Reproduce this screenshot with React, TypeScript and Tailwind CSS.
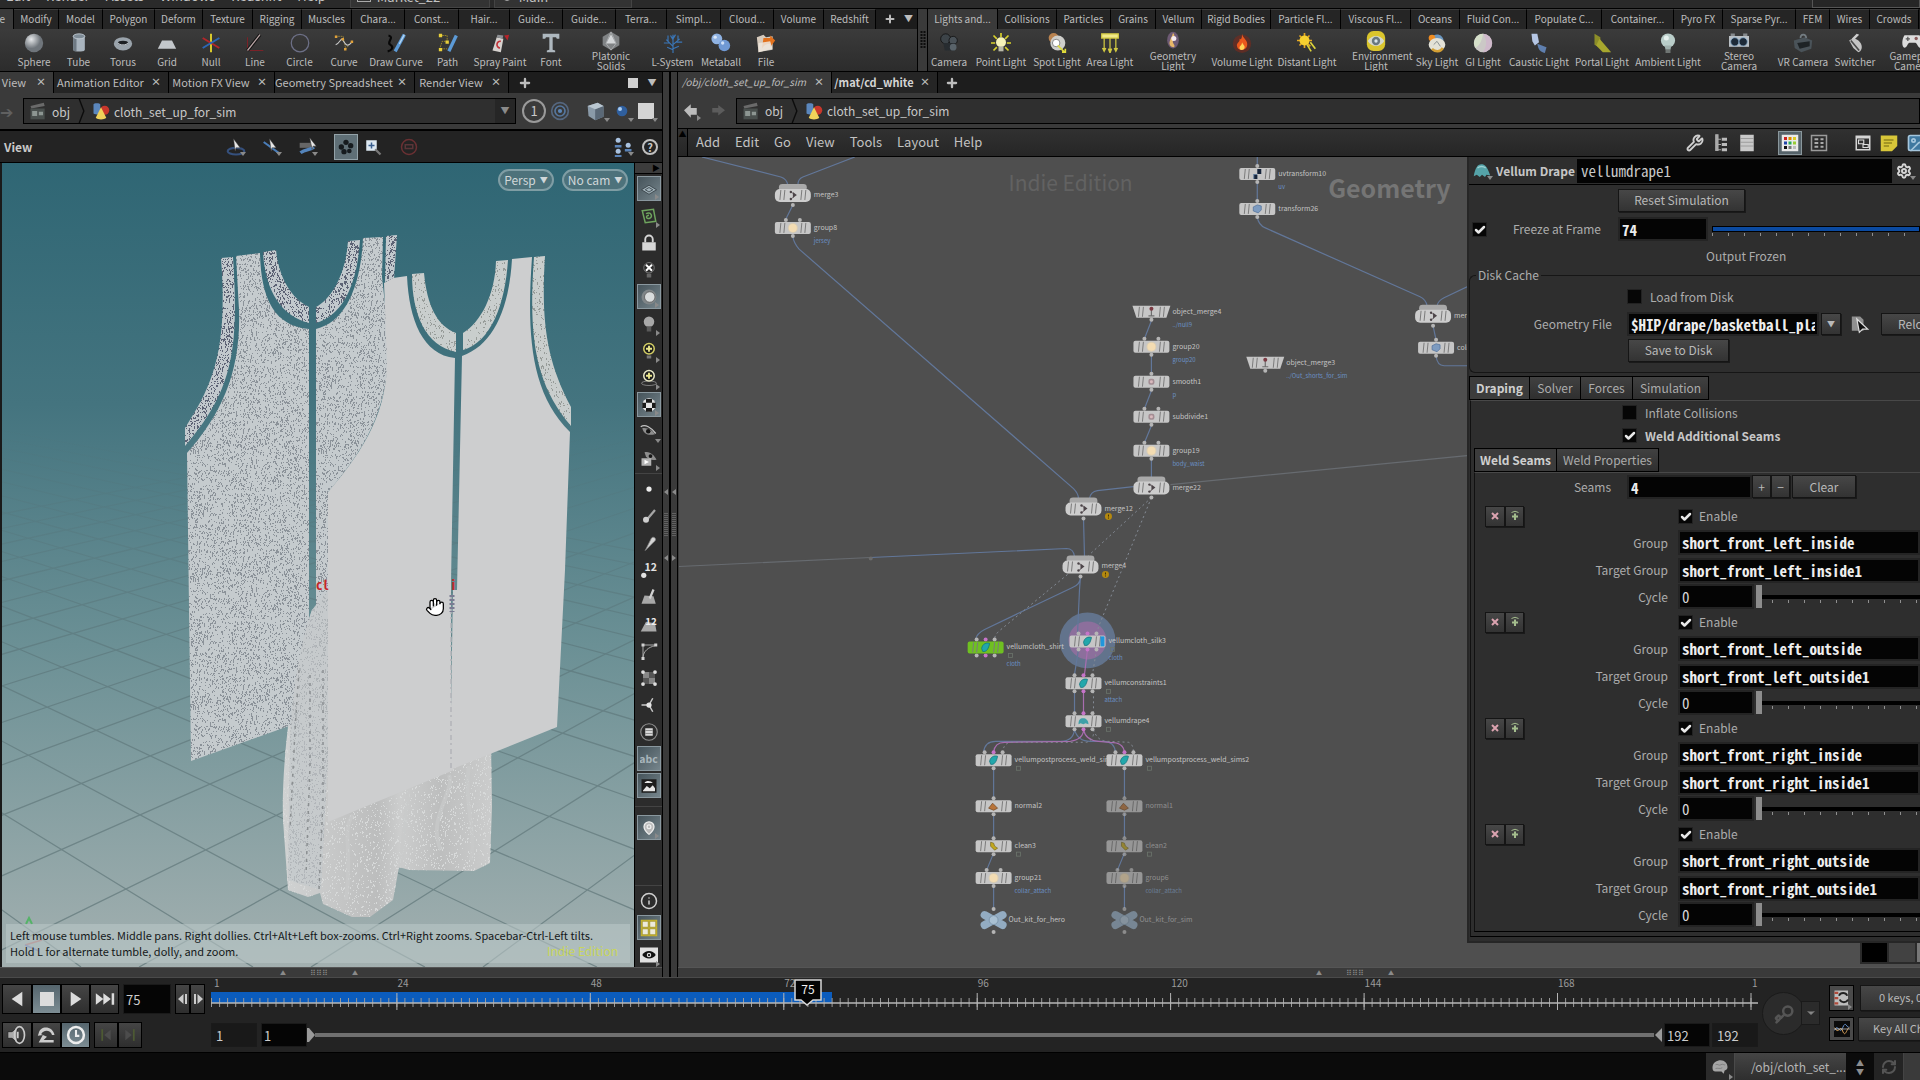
import type { ReactNode } from "react";
import { Check, ChevronDown, Hand, Image as ImageIcon, Info, Key, MapPin, Plus, RefreshCw, Settings, Wrench } from "lucide-react";

const UI = "font-['Noto_Sans_CJK_SC','Open_Sans',sans-serif]";
const MONO = "font-['Noto_Sans_Mono_CJK_SC','DejaVu_Sans_Mono',monospace]";

/* ---------- shelf data ---------- */

const leftShelfTabs = [
  { label: "Modify", w: "w-[45px]" },
  { label: "Model", w: "w-[44px]" },
  { label: "Polygon", w: "w-[52px]" },
  { label: "Deform", w: "w-[48px]" },
  { label: "Texture", w: "w-[50px]" },
  { label: "Rigging", w: "w-[49px]" },
  { label: "Muscles", w: "w-[50px]" },
  { label: "Chara...", w: "w-[53px]" },
  { label: "Const...", w: "w-[54px]" },
  { label: "Hair...", w: "w-[51px]" },
  { label: "Guide...", w: "w-[53px]" },
  { label: "Guide...", w: "w-[53px]" },
  { label: "Terra...", w: "w-[51px]" },
  { label: "Simpl...", w: "w-[54px]" },
  { label: "Cloud...", w: "w-[53px]" },
  { label: "Volume", w: "w-[50px]" },
  { label: "Redshift", w: "w-[52px]" },
];

const rightShelfTabs = [
  { label: "Lights and...", w: "w-[70px]", active: true },
  { label: "Collisions", w: "w-[59px]" },
  { label: "Particles", w: "w-[54px]" },
  { label: "Grains", w: "w-[45px]" },
  { label: "Vellum", w: "w-[46px]" },
  { label: "Rigid Bodies", w: "w-[69px]" },
  { label: "Particle Fl...", w: "w-[70px]" },
  { label: "Viscous Fl...", w: "w-[70px]" },
  { label: "Oceans", w: "w-[49px]" },
  { label: "Fluid Con...", w: "w-[67px]" },
  { label: "Populate C...", w: "w-[75px]" },
  { label: "Container...", w: "w-[72px]" },
  { label: "Pyro FX", w: "w-[49px]" },
  { label: "Sparse Pyr...", w: "w-[73px]" },
  { label: "FEM", w: "w-[34px]" },
  { label: "Wires", w: "w-[40px]" },
  { label: "Crowds", w: "w-[49px]" },
];

const leftTools = [
  { label: "Sphere", icon: "sphere", w: "w-[44px]" },
  { label: "Tube", icon: "tube", w: "w-[45px]" },
  { label: "Torus", icon: "torus", w: "w-[44px]" },
  { label: "Grid", icon: "grid", w: "w-[44px]" },
  { label: "Null", icon: "null", w: "w-[44px]" },
  { label: "Line", icon: "line", w: "w-[44px]" },
  { label: "Circle", icon: "circle", w: "w-[45px]" },
  { label: "Curve", icon: "curve", w: "w-[44px]" },
  { label: "Draw Curve", icon: "draw", w: "w-[60px]" },
  { label: "Path", icon: "path", w: "w-[43px]" },
  { label: "Spray Paint", icon: "spray", w: "w-[62px]" },
  { label: "Font", icon: "font", w: "w-[40px]" },
  { label: "Platonic Solids", icon: "platonic", w: "w-[80px]" },
  { label: "L-System", icon: "lsystem", w: "w-[43px]" },
  { label: "Metaball", icon: "metaball", w: "w-[54px]" },
  { label: "File", icon: "file", w: "w-[36px]" },
];

const rightTools = [
  { label: "Camera", icon: "camera", w: "w-[42px]" },
  { label: "Point Light", icon: "point", w: "w-[62px]" },
  { label: "Spot Light", icon: "spot", w: "w-[50px]" },
  { label: "Area Light", icon: "area", w: "w-[56px]" },
  { label: "Geometry Light", icon: "geo", w: "w-[70px]" },
  { label: "Volume Light", icon: "volume", w: "w-[68px]" },
  { label: "Distant Light", icon: "distant", w: "w-[62px]" },
  { label: "Environment Light", icon: "env", w: "w-[76px]" },
  { label: "Sky Light", icon: "sky", w: "w-[46px]" },
  { label: "GI Light", icon: "gi", w: "w-[46px]" },
  { label: "Caustic Light", icon: "caustic", w: "w-[66px]" },
  { label: "Portal Light", icon: "portal", w: "w-[60px]" },
  { label: "Ambient Light", icon: "ambient", w: "w-[72px]" },
  { label: "Stereo Camera", icon: "stereo", w: "w-[70px]" },
  { label: "VR Camera", icon: "vr", w: "w-[58px]" },
  { label: "Switcher", icon: "switcher", w: "w-[46px]" },
  { label: "Gamepad Camera", icon: "gamepad", w: "w-[68px]" },
];

const wrappedLabels = ["Platonic Solids", "Geometry Light", "Environment Light", "Stereo Camera", "Gamepad Camera"];

const toolArt: Record<string, ReactNode> = {
  sphere: <ellipse cx="12" cy="12" rx="11" ry="11" fill="url(#ball)" />,
  tube: (
    <>
      <path d="M5 4v16c0 3 14 3 14 0V4z" fill="#a9b4be" />
      <path d="M5 4v16c0 1 2 2 4 2V5z" fill="#6e7983" />
      <ellipse cx="12" cy="4" rx="7" ry="3" fill="#7e8b96" stroke="#c7d0d8" />
    </>
  ),
  torus: (
    <>
      <ellipse cx="12" cy="13" rx="11" ry="8" fill="#9aa3ab" />
      <ellipse cx="12" cy="12" rx="6" ry="2.6" fill="#1c1f22" />
      <path d="M6 12c2 3 10 3 12 0" stroke="#dfe5ea" fill="none" />
    </>
  ),
  grid: <path d="M6 9h12l5 10H1z" fill="#c3c7cb" />,
  null: (
    <>
      <path d="M12 1v22" stroke="#d8c92c" strokeWidth="2.4" />
      <path d="M2 6l20 12" stroke="#b3262a" strokeWidth="2.4" />
      <path d="M2 18L22 6" stroke="#2c67b5" strokeWidth="2.4" />
    </>
  ),
  line: (
    <>
      <path d="M3 21V5M3 21h19" stroke="#7a2228" strokeWidth="1.3" />
      <path d="M3 21L18 2" stroke="#111" strokeWidth="4" />
      <path d="M3 21L18 2" stroke="#b9a5a5" strokeWidth="1.6" />
    </>
  ),
  circle: <circle cx="12" cy="12" r="10.5" fill="none" stroke="#6d7087" strokeWidth="1.5" />,
  curve: (
    <>
      <path d="M2 4h9l3 15L22 10" stroke="#a58b3a" fill="none" strokeDasharray="2 1" />
      <path d="M2 14c6-2 6-10 9-5s5 9 11 1" stroke="#c9c9c9" fill="none" strokeWidth="1.3" />
      <path d="M1 3h3v3H1zM9 6h3v3H9zM12 18h3v3h-3zM20 9h3v3h-3z" fill="#e0a13a" />
    </>
  ),
  draw: (
    <>
      <path d="M3 3c8 2-3 8 2 11s2 7-3 8" stroke="#070707" strokeWidth="2.6" fill="none" />
      <path d="M22 2L11 22" stroke="#5c9ad6" strokeWidth="4" />
      <path d="M22 2l-6 11" stroke="#b7d7f2" strokeWidth="1.5" />
    </>
  ),
  path: (
    <>
      <path d="M2 3h9v7H5l-3 9h9" stroke="#a99325" fill="none" strokeDasharray="2 1" />
      <path d="M22 3L13 22" stroke="#5c9ad6" strokeWidth="4" />
      <path d="M1 1h4v4H1zM9 9h4v4H9zM1 18h4v4H1z" fill="#e8cf3a" />
    </>
  ),
  spray: (
    <>
      <path d="M8 5l8 2-3 16-10-2z" fill="#d6d2cf" />
      <path d="M9 2l7 1-1 4-7-2z" fill="#8d9094" />
      <path d="M13 10c-6-1-6 8-1 8" stroke="#c23339" strokeWidth="2" fill="none" />
      <path d="M17 3l6-1-2 7z" fill="#b8232a" />
    </>
  ),
  font: <path d="M2 1h20v6h-3l-1-2h-4v15l3 1v2H7v-2l3-1V5H6L5 7H2z" fill="#aeb8bf" />,
  platonic: (
    <>
      <path d="M12 1l10 6v10l-10 6L2 17V7z" fill="#808385" />
      <path d="M12 4l6 11H6z" fill="#d3d6d8" />
      <path d="M12 1L6 15l6 8 6-8z" fill="none" stroke="#aeb1b3" />
    </>
  ),
  lsystem: <path d="M12 24V12M12 16L4 8M12 14l8-7M12 12V2M6 10V3M8 12H1M18 9V3M16 11h7M12 8L9 3M12 7l3-5M12 20l-7-3M12 19l7-3" stroke="#3a76b8" strokeWidth="1.4" fill="none" />,
  metaball: (
    <>
      <circle cx="7" cy="7" r="6.5" fill="#8fb2e2" />
      <circle cx="16" cy="15" r="7" fill="#7099d4" />
      <circle cx="5" cy="5" r="2" fill="#dbe8f9" />
      <circle cx="14" cy="12" r="2" fill="#cfe0f7" />
    </>
  ),
  file: (
    <>
      <path d="M1 5l8-3 3 3 8-1v15L3 23z" fill="#d7cbbd" />
      <path d="M9 6h8V3l6 6-6 8v-4c-5 0-8 2-10 6z" fill="#e2711d" />
      <path d="M3 12l14-2 3 10L3 23z" fill="#efe8de" opacity=".85" />
    </>
  ),
  camera: (
    <>
      <circle cx="8" cy="7" r="6" fill="#3c4348" stroke="#111" />
      <circle cx="17" cy="9" r="5" fill="#4a5258" stroke="#111" />
      <path d="M5 12h14v9H7z" fill="#272c30" />
      <circle cx="17" cy="17" r="4" fill="#59636a" />
    </>
  ),
  point: (
    <>
      <path d="M12 0v5M0 12h5M19 12h5M3 3l4 4M21 3l-4 4M3 21l4-4M21 21l-4-4" stroke="#d9d22b" strokeWidth="2" />
      <circle cx="12" cy="11" r="6" fill="#f5f2b8" />
      <path d="M9 16h6v6H9z" fill="#b9b9a8" />
    </>
  ),
  spot: (
    <>
      <circle cx="8" cy="6" r="6" fill="#b98350" />
      <circle cx="13" cy="12" r="9" fill="#cfcfcb" />
      <circle cx="11" cy="12" r="4.5" fill="#fff" stroke="#777" />
      <path d="M13 15l8 8M18 23h4v-4" stroke="#e0dc3a" strokeWidth="2" fill="none" />
    </>
  ),
  area: <path d="M2 1h20v5H2zM5 7v13M12 7v15M19 7v13M3 18l2 4 2-4M10 19l2 5 2-5M17 18l2 4 2-4" fill="#f1e98a" stroke="#cfc740" strokeWidth="1.5" />,
  geo: (
    <>
      <ellipse cx="12" cy="11" rx="7" ry="10" fill="#6d5a74" />
      <path d="M12 2c5 6-3 8 1 14s-7 4-5-3 3-6 4-11" fill="#e7b768" />
      <circle cx="13" cy="9" r="3" fill="#f4e9f0" />
    </>
  ),
  volume: (
    <>
      <circle cx="12" cy="13" r="11" fill="#7c2a1c" opacity=".6" />
      <path d="M12 1c1 6 8 8 6 15-2 6-11 6-12 0-1-5 4-4 3-9 3 2 3-3 3-6z" fill="#e9581d" />
      <path d="M12 11c1 3 4 4 3 7s-6 3-6 0 3-3 3-7z" fill="#ffd457" />
    </>
  ),
  distant: (
    <>
      <path d="M9 0v18M0 9h18M3 3l13 13M15 3L3 15" stroke="#e6a823" strokeWidth="2" />
      <circle cx="9" cy="9" r="6" fill="#f6d02f" />
      <path d="M12 14l5 8M16 11l6 8" stroke="#ddd43a" strokeWidth="2" />
    </>
  ),
  env: (
    <>
      <rect x="1" y="0" width="22" height="24" rx="8" fill="#dac52d" />
      <path d="M2 12c5-8 15-8 20 0-5 8-15 8-20 0z" fill="#d6d9cd" />
      <circle cx="12" cy="12" r="5" fill="#68787f" />
      <circle cx="12" cy="12" r="2" fill="#d8e5ea" />
    </>
  ),
  sky: (
    <>
      <path d="M8 3c4-3 11-1 12 6H8z" fill="#6a96bf" />
      <circle cx="6" cy="6" r="4" fill="#ef8d23" />
      <ellipse cx="12" cy="14" rx="10" ry="8" fill="#e4e2d7" />
      <path d="M6 19c4 4 10 4 13-1" stroke="#d4a035" strokeWidth="3" fill="none" />
      <path d="M8 14l4-4 4 6" stroke="#7a8187" fill="none" />
    </>
  ),
  gi: (
    <>
      <circle cx="12" cy="12" r="11" fill="#cbc8c6" />
      <path d="M12 1a11 11 0 0 1 0 22c5-7 5-15 0-22z" fill="#cfb9cb" />
      <path d="M12 1a11 11 0 0 0-9 17c5-3 8-9 9-17z" fill="#d5dfc9" />
    </>
  ),
  caustic: (
    <>
      <path d="M3 1h7l2 10-5 4-3-5z" fill="#b5c6e4" />
      <path d="M10 13l11 4-2 7c-6-1-8-5-9-11z" fill="#5f7fae" />
    </>
  ),
  portal: (
    <>
      <path d="M3 1l7 4v13L3 14z" fill="#8c8d28" />
      <path d="M9 7l14 16H13L5 15z" fill="#a7a72e" />
    </>
  ),
  ambient: (
    <>
      <circle cx="12" cy="9" r="8.5" fill="#b9cdc9" />
      <path d="M8 15h8l-1 5H9z" fill="#9fb0ad" />
      <rect x="9" y="20" width="6" height="4" fill="#6f7573" />
      <circle cx="10" cy="6" r="3" fill="#e6f1ee" />
    </>
  ),
  stereo: (
    <>
      <path d="M0 6h24v13H0z" fill="#b9bfc4" />
      <circle cx="7" cy="13" r="5" fill="#1d2a38" stroke="#86a9c9" />
      <circle cx="17" cy="13" r="5" fill="#1d2a38" stroke="#86a9c9" />
      <path d="M2 3h5v3H2zM17 3h5v3h-5z" fill="#85898c" />
    </>
  ),
  vr: (
    <>
      <path d="M1 9l13-4 9 4-1 10-12 4-8-5z" fill="#4a5359" />
      <path d="M5 12l15-2v6L8 19z" fill="#1e2326" />
      <path d="M9 6c0-5 6-6 7 0" stroke="#737c82" fill="none" strokeWidth="2" />
    </>
  ),
  switcher: (
    <>
      <path d="M14 1l3 1-6 6-3-1z" fill="#cfcfcf" />
      <path d="M5 9c5-4 10-2 13 2 4 5 2 11-2 12l-6-5z" fill="#c4c4c4" />
      <path d="M7 9l10 12" stroke="#4a4a4a" strokeWidth="2" />
    </>
  ),
  gamepad: (
    <>
      <path d="M3 5h18c3 6 4 15 1 15s-4-6-6-6H9c-2 0-3 6-6 6S-1 11 3 5z" fill="#dcdcdc" />
      <path d="M7 7v5M4.5 9.5h5" stroke="#555" strokeWidth="1.5" />
      <circle cx="17" cy="9" r="2" fill="#8a5a5a" />
    </>
  ),
};

function Svg({ children, className = "size-5" }: { children: ReactNode; className?: string }) {
  return (
    <svg viewBox="0 0 24 24" className={`shrink-0 ${className}`} aria-hidden="true">
      {children}
    </svg>
  );
}

type ShelfTab = { label: string; w: string; active?: boolean };
type Tool = { label: string; icon: string; w: string };

function ShelfTabs({ tabs }: { tabs: ShelfTab[] }) {
  return (
    <>
      {tabs.map((t, i) => (
        <button
          key={i}
          className={`h-full shrink-0 border-r border-black text-center whitespace-nowrap ${t.w} ${
            t.active ? "bg-[#3a3a3a]" : "border-t border-t-[#3d3d3d] bg-[#252525]"
          }`}
        >
          {t.label}
        </button>
      ))}
    </>
  );
}

function ShelfTools({ tools }: { tools: Tool[] }) {
  return (
    <>
      {tools.map((t) =>
        wrappedLabels.includes(t.label) ? (
          <button key={t.label} className={`flex h-full shrink-0 flex-col items-center pt-0.5 leading-[10px] ${t.w}`}>
            <Svg>{toolArt[t.icon]}</Svg>
            <span className="w-12 text-center">{t.label}</span>
          </button>
        ) : (
          <button key={t.label} className={`flex h-full shrink-0 flex-col items-center gap-1 pt-1 leading-[10px] whitespace-nowrap ${t.w}`}>
            <Svg>{toolArt[t.icon]}</Svg>
            <span>{t.label}</span>
          </button>
        )
      )}
    </>
  );
}

function TopMenu() {
  return (
    <header className="flex h-[9px] shrink-0 items-end overflow-hidden border-b border-black bg-[#2a2a2a] text-[13px] leading-4 text-[#c4c4c4]">
      <nav className="flex gap-4 pb-1 pl-1.5">
        {["Edit", "Render", "Assets", "Windows", "Redshift", "Help"].map((m) => (
          <button key={m}>{m}</button>
        ))}
      </nav>
      <div className="ml-6 flex w-[140px] items-center gap-1.5 border-x border-b border-[#444] bg-[#333] px-1.5 pb-0.5">
        <span className="h-2.5 w-3.5 border border-[#aaa]" />
        <span>Market_22</span>
      </div>
      <div className="ml-1 flex w-[138px] items-center gap-2 border-x border-b border-[#444] bg-[#333] px-2 pb-0.5">
        <span className="size-2 rounded-full border border-[#aaa]" />
        <span>Main</span>
      </div>
      <div className="ml-auto h-4 w-[108px] border border-[#555] bg-[#262626]" />
    </header>
  );
}

function Shelf() {
  return (
    <section className="flex h-[63px] shrink-0 overflow-hidden border-b border-black text-[10px] text-[#bdbdbd]">
      <div className="flex w-[917px] shrink-0 flex-col">
        <div className="flex h-5 bg-[#1c1c1c]">
          <button className="flex w-[14px] shrink-0 items-center justify-end overflow-hidden border-r border-black bg-[#3a3a3a] pr-2">
            Create
          </button>
          <ShelfTabs tabs={leftShelfTabs} />
          <button className="flex w-7 items-center justify-center" aria-label="Add shelf"><Plus className="size-3" strokeWidth={4} /></button>
          <button className="text-[9px]" aria-label="Shelf menu">▼</button>
        </div>
        <div className="flex flex-1 bg-linear-to-b from-[#3b3b3b] to-[#2c2c2c] pl-3">
          <ShelfTools tools={leftTools} />
        </div>
      </div>
      <div className="flex w-[11px] shrink-0 items-center justify-center border-x border-black bg-[#3a3a3a]">
        <svg viewBox="0 0 6 18" className="h-[18px] w-1.5"><path d="M1.5 0v18M4.5 0v18" stroke="#0d0d0d" strokeWidth="2" strokeDasharray="2 1" /></svg>
      </div>
      <div className="flex min-w-0 flex-1 flex-col">
        <div className="flex h-5 bg-[#1c1c1c]">
          <ShelfTabs tabs={rightShelfTabs} />
        </div>
        <div className="flex flex-1 bg-linear-to-b from-[#3b3b3b] to-[#2c2c2c]">
          <ShelfTools tools={rightTools} />
        </div>
      </div>
    </section>
  );
}

function PaneTab({ label, w, active, text = "" }: { label: string; w: string; active?: boolean; text?: string }) {
  return (
    <div className={`flex h-full shrink-0 items-center justify-end border-r border-black pr-[7px] ${w} ${active ? "bg-[#3a3a3a]" : "bg-[#252525]"}`}>
      <button className={`flex-1 pr-1 text-center whitespace-nowrap ${text}`}>{label}</button>
      <button className="text-[10px] font-bold" aria-label={`Close ${label}`}>×</button>
    </div>
  );
}

function Clapper() {
  return (
    <Svg className="size-5">
      <path d="M3 6l16-4 1 4L4 9z" fill="#6a6a6a" />
      <path d="M3 9h17v13H3z" fill="#4a504e" />
      <path d="M5 12h6v6H5zM13 13h5v4h-5z" fill="#8d9692" />
    </Svg>
  );
}

function GeoIcon() {
  return (
    <Svg className="size-[18px]">
      <path d="M2 3c0-2 9-2 9 0v12c0 2-9 2-9 0z" fill="#5b87bd" />
      <circle cx="17" cy="11" r="6" fill="#c8372c" />
      <path d="M12 7l7 14c-3 3-11 3-14 0z" fill="#f0d25a" />
    </Svg>
  );
}

function PathBox({ dropdown }: { dropdown?: boolean }) {
  return (
    <div className="flex h-[26px] min-w-0 flex-1 items-center border border-black bg-[#2f2f2f] text-[12px] text-[#c8c8c8]">
      <span className="flex h-full items-center gap-1 pl-1"><Clapper />obj</span>
      <svg viewBox="0 0 8 26" className="ml-2 h-full w-2"><path d="M1 0l5 13-5 13" fill="none" stroke="#0c0c0c" strokeWidth="1.5" /></svg>
      <span className="flex flex-1 items-center gap-1 pl-1.5"><GeoIcon />cloth_set_up_for_sim</span>
      {dropdown && <button className="flex h-full w-5 items-center justify-center bg-[#262626] text-[9px] text-[#8a8a8a]" aria-label="Path history">▼</button>}
    </div>
  );
}

function Tri({ dir = "down" }: { dir?: "down" | "right" }) {
  return (
    <svg viewBox="0 0 6 6" className="absolute right-0 bottom-0 size-1.5">
      <path d={dir === "down" ? "M0 1h6L3 5z" : "M1 0v6l4-3z"} fill="#8a8a8a" />
    </svg>
  );
}

/* ---------- 3D viewport ---------- */

function speckle(size: number, count: number, seed: number) {
  let s = seed;
  const rnd = () => {
    s = (s * 16807) % 2147483647;
    return s / 2147483647;
  };
  let d = "";
  for (let i = 0; i < count; i++) {
    const x = Math.floor(rnd() * size);
    const y = Math.floor(rnd() * size);
    const h = rnd() > 0.7 ? 2 : 1;
    d += `M${x} ${y}h1v${h}h-1z`;
  }
  return d;
}

const dotsBody = speckle(128, 2700, 77);
const dotsDense = speckle(96, 2100, 1234);
const dotsLight = speckle(128, 1500, 991);

const floorLines: string[] = [];
for (let i = -14; i <= 16; i++) {
  floorLines.push(`M-900 260L${80 + i * 172} 967`);
  floorLines.push(`M1500 215L${138 + i * 172} 967`);
}

const backPanels =
  "M235 256L259 253C260 300 274 326 308 329V715L288 726 190 761 186 453C222 412 240 370 238 310zM315 329C345 322 360 285 362 238L382 237 381 277 388 340C388 400 372 440 327 492V760H315z";
const backTrim =
  "M220 258L232 257C238 350 232 390 184 446V428C212 385 227 350 220 258zM262 252L275 250C278 278 290 298 308 307V323C280 316 264 290 262 252zM347 241L359 240C356 285 342 315 315 323V307C332 298 345 272 347 241zM385 236L396 235 393 279 384 282z";
const frontPanels =
  "M383 283L392 278 406 276C408 320 422 355 454 358L450 583V768L453 770 327 822V492C365 448 386 410 386 360zM461 356C492 345 508 310 511 259L531 257C526 330 528 392 569 432L564 570 556 727 449 770 452 590 456 590z";
const frontTrim =
  "M411 274L423 273C426 305 436 326 455 333V352C425 346 411 315 411 274zM495 261L507 260C504 305 490 342 462 350V333C480 322 494 295 495 261zM533 257L544 256C540 320 545 360 570 407V426C535 385 527 340 533 257z";
const shorts =
  "M311 610C292 670 280 760 282 820L287 890 307 897 319 893 322 904 351 917H369L392 900 398 867 408 870 473 871 489 863 491 807 490 740 330 600z";
const shortsBack = "M311 610C300 640 291 690 289 740L287 880 320 890 327 760V590z";

function ViewportScene() {
  return (
    <svg viewBox="0 163 634 804" preserveAspectRatio="xMidYMid slice" className="absolute inset-0 size-full">
      <defs>
        <linearGradient id="sky" x1="0" y1="0" x2="0" y2="1">
          <stop offset="0" stopColor="#2f6674" />
          <stop offset=".3" stopColor="#44747f" />
          <stop offset=".6" stopColor="#6b9095" />
          <stop offset="1" stopColor="#a3b0b0" />
        </linearGradient>
        <linearGradient id="floor" gradientUnits="userSpaceOnUse" x1="0" y1="400" x2="0" y2="967">
          <stop offset="0" stopColor="#4f6f75" stopOpacity="0" />
          <stop offset=".45" stopColor="#5a7478" stopOpacity=".6" />
          <stop offset="1" stopColor="#6a7f81" stopOpacity=".85" />
        </linearGradient>
        <linearGradient id="leg" x1="0" y1="0" x2="1" y2="0">
          <stop offset="0" stopColor="#d0d2d2" />
          <stop offset=".25" stopColor="#c6c7c7" />
          <stop offset=".45" stopColor="#bcbdbd" />
          <stop offset=".56" stopColor="#cccdcd" />
          <stop offset=".75" stopColor="#bdbebe" />
          <stop offset="1" stopColor="#cbcccc" />
        </linearGradient>
        <pattern id="body" width="128" height="128" patternUnits="userSpaceOnUse">
          <rect width="128" height="128" fill="#c5cbce" />
          <path d={dotsBody} fill="#8b9299" />
        </pattern>
        <pattern id="trim" width="96" height="96" patternUnits="userSpaceOnUse">
          <rect width="96" height="96" fill="#c2c9cd" />
          <path d={dotsDense} fill="#5d6375" />
        </pattern>
        <pattern id="trim2" width="128" height="128" patternUnits="userSpaceOnUse">
          <rect width="128" height="128" fill="#c9cecd" />
          <path d={dotsLight} fill="#979c99" />
        </pattern>
        <pattern id="mesh" width="128" height="128" patternUnits="userSpaceOnUse">
          <path d={dotsLight} fill="#d7d9d9" />
        </pattern>
      </defs>
      <rect x="0" y="163" width="634" height="804" fill="url(#sky)" />
      <path d={floorLines.join("")} stroke="url(#floor)" strokeWidth="1.3" fill="none" />
      <path d={shorts} fill="url(#leg)" />
      <path d={shorts} fill="url(#mesh)" />
      <path d="M400 868C402 830 408 800 408 780M345 900C352 850 340 830 352 815M440 850C425 820 455 790 448 775M470 860C476 830 462 800 468 766" stroke="#c9caca" strokeWidth="4" fill="none" opacity=".7" />
      <path d={backPanels} fill="url(#body)" />
      <path d={backTrim} fill="url(#trim)" />
      <path d={shortsBack} fill="#c6cacb" opacity=".9" />
      <path d={shortsBack} fill="url(#body)" opacity=".35" />
      <path d="M298 670l-4 60-5 100M309 675v90l-4 110M322 670v130l-4 90" stroke="#8b8f91" strokeWidth="1.5" strokeDasharray="3 5" fill="none" />
      <path d={frontPanels} fill="#cdcecf" />
      <path d={frontTrim} fill="url(#trim2)" />
      <path d="M450 595V768" stroke="#b2b4b9" strokeWidth="1.5" strokeDasharray="5 3 2 4" />
      <path d="M451 595v17" stroke="#7a7b92" strokeWidth="5" strokeDasharray="2 2" />
      <text x="315" y="590" fontSize="13" fontWeight="bold" fill="#c5262b" className={MONO}>cl</text>
      <text x="449" y="590" fontSize="13" fontWeight="bold" fill="#c5262b" className={MONO}>i</text>
      <path d="M25 924l3-6 3 6" fill="none" stroke="#55b368" strokeWidth="2" />
      <path d="M24 945l17-5" stroke="#b66a6c" strokeWidth="1.5" />
      <path d="M24 945l14 6" stroke="#6a74b6" strokeWidth="1.5" />
    </svg>
  );
}

type SideTool = { id: string; on?: boolean; tri?: "down" | "right"; art: ReactNode };

const sideTools: SideTool[] = [
  { id: "Plane", on: true, tri: "right", art: <path d="M2 13l10-6 10 6-10 6zM7 13l5-3 5 3-5 3z" fill="#9fb0b8" stroke="#2d363b" /> },
  { id: "Backface", tri: "right", art: <path d="M3 5l15-2 3 16L7 21zM8 9c6-4 10 4 5 6s-6-4-1-4" fill="none" stroke="#6ea45e" strokeWidth="2" /> },
  { id: "Lock", art: <><path d="M7 11V7a5 5 0 0 1 10 0v4" fill="none" stroke="#d6d6d6" strokeWidth="2.5" /><path d="M3 11h18v11H3z" fill="#d6d6d6" /></> },
  { id: "No lights", art: <><circle cx="12" cy="9" r="7" fill="none" stroke="#8b8b8b" /><path d="M8 5l8 8M16 5l-8 8" stroke="#fff" strokeWidth="2.5" /><path d="M9 17h6v5H9z" fill="#666" /></> },
  { id: "Headlight", on: true, tri: "right", art: <><circle cx="12" cy="12" r="10" fill="#7f8588" /><circle cx="13" cy="12" r="7" fill="#d9dcdd" stroke="#555" /></> },
  { id: "Light", tri: "right", art: <><circle cx="12" cy="9" r="7" fill="#a8a8a8" /><path d="M9 15h6v7H9z" fill="#5a5a5a" /></> },
  { id: "High quality light", tri: "right", art: <><circle cx="12" cy="9" r="7" fill="#1e1e1e" stroke="#d4cf65" strokeWidth="2" /><path d="M12 5v8M8 9h8" stroke="#ece78a" strokeWidth="2.5" /><path d="M9 18h6v4H9z" fill="#777" /></> },
  { id: "Shadows", tri: "right", art: <><ellipse cx="12" cy="19" rx="10" ry="3" fill="none" stroke="#999" /><circle cx="12" cy="9" r="7" fill="#1e1e1e" stroke="#e9e8c7" strokeWidth="2" /><path d="M12 5v8M8 9h8" stroke="#ece78a" strokeWidth="2.5" /></> },
  { id: "Materials", on: true, tri: "right", art: <><circle cx="12" cy="12" r="9" fill="#e4e4e4" /><path d="M8 4h8v5H8zM3 9h5v7H3zM16 9h5v7h-5zM8 16h8v5H8z" fill="#191919" /></> },
  { id: "Display", tri: "down", art: <><path d="M1 5c6-4 14 1 20 9" fill="none" stroke="#c3c3c3" strokeWidth="1.8" /><path d="M3 7c2 8 8 10 17 8C16 9 10 6 3 7z" fill="#8d8d8d" /><circle cx="11" cy="11" r="3" fill="#161616" /></> },
  { id: "Snapshot", tri: "right", art: <><path d="M6 3c7-2 13 4 16 10-6 1-10 0-14-4z" fill="#8d8d8d" /><circle cx="14" cy="8" r="2.5" fill="#161616" /><path d="M2 11h13v10H2z" fill="#b4b4b4" /><path d="M6 13l6 3-6 3z" fill="#fff" /></> },
];

const markerTools: SideTool[] = [
  { id: "Points", art: <circle cx="12" cy="12" r="3.5" fill="#ededed" /> },
  { id: "Point normals", art: <><path d="M20 4L9 17" stroke="#a5a5a5" strokeWidth="3" /><circle cx="8" cy="17" r="4" fill="#cfcfcf" /></> },
  { id: "Point trails", art: <path d="M15 6a3 3 0 1 1 4 4L7 22z" fill="#d4d4d4" stroke="#888" /> },
  { id: "Point numbers", art: <><text x="6" y="13" fontSize="14" fontWeight="bold" fill="#e2e2e2">12</text><circle cx="5" cy="19" r="3.5" fill="#e2e2e2" /></> },
  { id: "Primitive normals", art: <><path d="M6 10l12 1 3 10H2z" fill="#a8a8a8" /><path d="M13 14l5-12" stroke="#d2d2d2" strokeWidth="3" /></> },
  { id: "Primitive numbers", art: <><path d="M8 9l12 2 2 11H1z" fill="#a8a8a8" /><text x="7" y="13" fontSize="13" fontWeight="bold" fill="#ededed">12</text></> },
  { id: "Hulls", art: <><path d="M4 22V4h17M4 20C5 12 11 7 20 5" fill="none" stroke="#b5b5b5" strokeWidth="1.2" /><path d="M2 2h4v4H2zM19 2h4v4h-4zM2 20h4v4H2z" fill="#d0d0d0" /></> },
  { id: "Profiles", art: <><path d="M4 4h16v16H4z" fill="#555" /><path d="M4 4h8v8H4zM12 12h8v8h-8z" fill="#868686" /><g fill="#ddd"><circle cx="4" cy="4" r="2.5" /><circle cx="20" cy="4" r="2.5" /><circle cx="4" cy="20" r="2.5" /><circle cx="20" cy="20" r="2.5" /></g></> },
  { id: "Vertices", art: <><path d="M12 12L2 12M12 12l5-9M12 12l5 9" stroke="#c9c9c9" strokeWidth="2" /><circle cx="12" cy="12" r="3.5" fill="#e4e4e4" /></> },
  { id: "Groups", art: <><circle cx="12" cy="12" r="11" fill="none" stroke="#8e8e8e" strokeWidth="1.5" /><path d="M7 7h10v10H7z" fill="#d8d8d8" /><path d="M7 10h10M7 14h10" stroke="#777" /></> },
  { id: "Text", on: true, art: <text x="-1" y="17" fontSize="14" fontWeight="bold" fill="#a9b6bc">abc</text> },
  { id: "Background", on: true, art: <><path d="M2 3h20v18H2z" fill="#1c1c1c" /><path d="M4 18l5-6 4 3 4-4 3 4v4H4zM6 8c2-4 9-3 11 0z" fill="#e6e6e6" /></> },
];

function SideButton({ id, on, tri, art }: SideTool) {
  return (
    <button aria-label={id} className={`relative mx-auto flex h-[25px] w-6 shrink-0 items-center justify-center ${on ? "border border-[#8a989f] bg-linear-to-br from-[#46545b] to-[#76858c]" : ""}`}>
      <Svg className="size-[18px]">{art}</Svg>
      {tri && <Tri dir={tri} />}
    </button>
  );
}

function SceneView() {
  return (
    <section className="flex min-w-0 flex-[662_1_0%] flex-col">
      <div className="flex h-[21px] shrink-0 bg-[#1d1d1d] text-[11px] text-[#bdbdbd]">
        <PaneTab label="View" w="w-[54px]" active text="-ml-1" />
        <PaneTab label="Animation Editor" w="w-[115px]" />
        <PaneTab label="Motion FX View" w="w-[106px]" />
        <PaneTab label="Geometry Spreadsheet" w="w-[140px]" />
        <PaneTab label="Render View" w="w-[94px]" />
        <button className="flex w-8 items-center justify-center" aria-label="New tab"><Plus className="size-3.5" strokeWidth={4} /></button>
        <span className="mr-1 ml-auto size-2.5 self-center bg-[#d0d0d0]" />
        <button className="w-5 text-[9px]" aria-label="Pane menu">▼</button>
      </div>
      <div className="flex h-[37px] shrink-0 items-center border-b border-black bg-[#3a3a3a] pr-1">
        <span className="w-[23px] text-[#606060]">➔</span>
        <PathBox dropdown />
        <div className="ml-1.5 flex items-center gap-1">
          <button className="size-6 rounded-full border-2 border-[#9a9a9a] text-[13px] leading-4 text-[#c9c9c9]">1</button>
          <Svg className="size-5"><circle cx="12" cy="12" r="10" fill="none" stroke="#55677f" strokeWidth="2" /><circle cx="12" cy="12" r="6" fill="none" stroke="#55779f" strokeWidth="2" /><circle cx="12" cy="12" r="2.5" fill="#5b86b8" /></Svg>
          <span className="relative ml-3 flex size-6 items-center"><Svg className="size-5"><path d="M2 6l12-4 7 4v13l-10 4-8-5z" fill="#8a9aa8" /><path d="M11 10l10-4v13l-10 4z" fill="#5a6876" /><path d="M2 6l12-4 7 4-10 4z" fill="#b9c6d0" /></Svg><Tri /></span>
          <span className="relative flex h-6 w-5 items-center"><Svg className="size-4"><circle cx="12" cy="12" r="8" fill="#2f5f9e" /><circle cx="9" cy="9" r="3" fill="#a9cbef" /></Svg><Tri /></span>
          <span className="relative flex h-6 w-5 items-center"><span className="size-4 bg-[#d4d4d4]" /><Tri /></span>
        </div>
      </div>
      <div className="flex h-[33px] shrink-0 items-center border-y border-black bg-[#232323] px-1 text-[#c8c8c8]">
        <span className="flex-1 text-[12px] font-bold">View</span>
        <div className="flex flex-[14_1_0%] items-center justify-center gap-4 pr-3">
          {["Select", "Move", "Handles"].map((name, i) => (
            <button key={name} className="relative size-5" aria-label={name}>
              <Svg className="size-5">
                {i === 0 && <ellipse cx="12" cy="17" rx="10" ry="4" fill="none" stroke="#35507d" strokeWidth="2.5" />}
                {i === 1 && <path d="M2 6l18 13" stroke="#4a7db8" strokeWidth="2.5" />}
                {i === 2 && <><path d="M2 7h14v6H2z" fill="#666" /><path d="M3 19c6-5 12-3 16-7" stroke="#5484bb" strokeWidth="4" fill="none" /></>}
                <path d={i === 2 ? "M14 1l8 10h-4l-1 4z" : "M9 2l8 11h-5l-1 4z"} fill="#e6e6e6" stroke="#333" strokeWidth=".6" />
              </Svg>
              <Tri />
            </button>
          ))}
          <button className="flex h-[26px] w-6 items-center justify-center border border-[#93a2a8] bg-[#5f6f76]" aria-label="Points mode">
            <Svg className="size-4"><g fill="#161b1e"><circle cx="12" cy="5" r="4" /><circle cx="5" cy="12" r="4" /><circle cx="19" cy="10" r="4" /><circle cx="9" cy="19" r="4" /><circle cx="17" cy="18" r="3.5" /></g></Svg>
          </button>
          <button className="-ml-2.5 size-5" aria-label="Zoom region"><Svg className="size-[18px]"><path d="M3 3h14v14H3z" fill="#dde8f2" /><path d="M10 6v8M6 10h8" stroke="#3a5f8f" strokeWidth="2" /><path d="M15 15l7 7" stroke="#777" strokeWidth="3" /></Svg></button>
          <button className="size-5" aria-label="Stop"><Svg className="size-[18px]"><circle cx="12" cy="12" r="10" fill="none" stroke="#6b3033" strokeWidth="2" /><path d="M7 9h10v5H7z" fill="none" stroke="#5a3538" strokeWidth="2" /></Svg></button>
        </div>
        <span className="relative mr-2 size-5"><Svg className="size-5"><g fill="#a9c2e0"><circle cx="5" cy="4" r="3" /><circle cx="5" cy="17" r="3" /><circle cx="17" cy="10" r="3" /></g><path d="M1 11h8M1 23h8M13 16h8" stroke="#5a83b8" strokeWidth="3" /></Svg><Tri /></span>
        <button className="flex size-4 shrink-0 items-center justify-center rounded-full border-2 border-[#c0c0c0] text-[11px] leading-3 font-bold">?</button>
      </div>
      <div className="flex min-h-0 flex-1">
        <div className="relative min-w-0 flex-1 overflow-hidden border-l-2 border-[#1a1a1a]">
          <ViewportScene />
          <div className="absolute top-1.5 right-1.5 flex gap-2 text-[12px] leading-4 text-[#d0d7d9]">
            <button className="flex h-[22px] w-14 items-center justify-center gap-1 rounded-full border-2 border-[#7f9da4] bg-[#4d727b]">Persp <span className="text-[8px]">▼</span></button>
            <button className="flex h-[22px] w-[66px] items-center justify-center gap-1 rounded-full border-2 border-[#7f9da4] bg-[#4d727b]">No cam <span className="text-[8px]">▼</span></button>
          </div>
          <Hand className="absolute top-[54%] left-[67%] size-5 fill-white text-black" strokeWidth={1.5} />
          <div className="absolute inset-x-1 bottom-1 h-[39px] bg-[#b9c6c6]/60 px-1 pt-[3px] text-[11px] leading-4 text-[#15191a]">
            <p className="whitespace-nowrap">Left mouse tumbles. Middle pans. Right dollies. Ctrl+Alt+Left box-zooms. Ctrl+Right zooms. Spacebar-Ctrl-Left tilts.</p>
            <p className="flex justify-between pr-2"><span>Hold L for alternate tumble, dolly, and zoom.</span><span className="text-[12px] text-[#c9d65a]">Indie Edition</span></p>
          </div>
        </div>
        <div className="flex w-7 shrink-0 flex-col gap-0.5 border-l border-black bg-[#2c2c2c]">
          <span className="flex h-[11px] items-center justify-end border-b border-black bg-[#3c3c3c] pr-0.5 text-[8px] text-black">▶</span>
          {sideTools.map((t) => <SideButton key={t.id} {...t} />)}
          <span className="border-t border-[#444]" />
          {markerTools.map((t) => <SideButton key={t.id} {...t} />)}
          <span className="my-1.5 border-t border-[#444]" />
          <SideButton id="Handles" on tri="right" art={<MapPin x="2" y="0" width="20" height="24" color="#eee" fill="#bbb" />} />
          <span className="mt-auto border-t border-[#444]" />
          <SideButton id="Info" art={<Info width="24" height="24" color="#cfcfcf" />} />
          <SideButton id="Quad view" on art={<><path d="M1 1h22v22H1z" fill="#c5b32f" /><path d="M3 3h8v8H3zM13 3h8v8h-8zM3 13h8v8H3zM13 13h8v8h-8z" fill="#eceadb" stroke="#9d8d20" /></>} />
          <SideButton id="Visibility" tri="right" art={<><path d="M0 2h24v20H0z" fill="#e0e0e0" /><path d="M3 12c4-7 14-7 18 0-4 6-14 6-18 0z" fill="#111" /><circle cx="12" cy="12" r="3" fill="#ddd" /><circle cx="12" cy="12" r="1.5" fill="#111" /></>} />
        </div>
      </div>
      <div className="flex h-2.5 shrink-0 items-center justify-center gap-6 border-t border-[#555] bg-[#3a3a3a] pr-6 text-[6px] text-[#8a8a8a]"><span>▲</span><span className="text-[8px]">⠿⠿⠿</span><span>▲</span></div>
    </section>
  );
}

/* ---------- network editor ---------- */

type NodeKind = "box" | "merge" | "object" | "null";
type NetNode = {
  x: number;
  y: number;
  name: string;
  sub?: string;
  kind?: NodeKind;
  icon?: string;
  ins?: number;
  outs?: number;
  dim?: boolean;
  color?: string;
  warn?: boolean;
  flag?: boolean;
};

const netNodes: NetNode[] = [
  { x: 792, y: 195, name: "merge3", kind: "merge" },
  { x: 792, y: 228, name: "group8", sub: "jersey", icon: "group", ins: 2 },
  { x: 1257, y: 174, name: "uvtransform10", sub: "uv", icon: "uv" },
  { x: 1257, y: 209, name: "transform26", icon: "xform" },
  { x: 1151, y: 312, name: "object_merge4", sub: "../null9", kind: "object", ins: 0 },
  { x: 1151, y: 347, name: "group20", sub: "group20", icon: "group", ins: 2 },
  { x: 1151, y: 382, name: "smooth1", sub: "p", icon: "soft" },
  { x: 1151, y: 417, name: "subdivide1", icon: "soft", ins: 2 },
  { x: 1151, y: 451, name: "group19", sub: "body_waist", icon: "group", ins: 2 },
  { x: 1151, y: 488, name: "merge22", kind: "merge" },
  { x: 1265, y: 363, name: "object_merge3", sub: "../Out_shorts_for_sim", kind: "object", ins: 0 },
  { x: 1433, y: 316, name: "merge", kind: "merge" },
  { x: 1436, y: 348, name: "color", icon: "xform" },
  { x: 1083, y: 509, name: "merge12", kind: "merge", warn: true },
  { x: 1080, y: 567, name: "merge4", kind: "merge", warn: true },
  { x: 985, y: 648, name: "vellumcloth_shirt", sub: "cloth", icon: "vellum", ins: 3, outs: 3, color: "#6fc021", flag: true },
  { x: 1087, y: 642, name: "vellumcloth_silk3", sub: "cloth", icon: "vellum", ins: 3, outs: 3, flag: true },
  { x: 1083, y: 684, name: "vellumconstraints1", sub: "attach", icon: "vellum", ins: 3, outs: 3, flag: true },
  { x: 1083, y: 722, name: "vellumdrape4", icon: "drape", ins: 3, outs: 3, flag: true },
  { x: 993, y: 761, name: "vellumpostprocess_weld_sims", icon: "vellum", ins: 3, flag: true },
  { x: 1124, y: 761, name: "vellumpostprocess_weld_sims2", icon: "vellum", ins: 3, flag: true },
  { x: 993, y: 807, name: "normal2", icon: "normal" },
  { x: 993, y: 847, name: "clean3", icon: "clean", flag: true },
  { x: 993, y: 879, name: "group21", sub: "collar_attach", icon: "group", ins: 2 },
  { x: 993, y: 921, name: "Out_kit_for_hero", kind: "null" },
  { x: 1124, y: 807, name: "normal1", icon: "normal", dim: true },
  { x: 1124, y: 847, name: "clean2", icon: "clean", dim: true, flag: true },
  { x: 1124, y: 879, name: "group6", sub: "collar_attach", icon: "group", ins: 2, dim: true },
  { x: 1124, y: 921, name: "Out_kit_for_sim", kind: "null", dim: true },
];

const nodeArt: Record<string, ReactNode> = {
  group: <><circle r="5" fill="#d9cdb4" /><circle r="4" fill="#f3dcb2" /></>,
  uv: <><path d="M-4 0h4v5h-4z" fill="#5d7796" /><path d="M0-5h4v5h-4z" fill="#16243a" /><path d="M-3 1h3v4h-3z" fill="#16243a" /></>,
  xform: <path d="M-4-2l4-2 4 1v4l-3 3-5-2z" fill="#7d9bc0" stroke="#4f6f99" strokeWidth=".7" />,
  soft: <><rect x="-3" y="-3" width="6" height="6" rx="2" fill="#a38d93" /><circle r="1.5" fill="#d9b9bd" /></>,
  merge: <><path d="M-2-3l3 2M-2 4l3-2" stroke="#7a7276" /><path d="M0-3l4 3-4 3z" fill="#4c4448" /><circle cx="-2" cy="-3" r="1.2" fill="#4c4448" /><circle cx="-2" cy="4" r="1.2" fill="#4c4448" /></>,
  object: <><path d="M0-2v6M-3 4h6" stroke="#6e6e6e" strokeWidth="1.2" /><circle cy="-3" r="2" fill="#7b3a43" /></>,
  vellum: <path d="M-4 1c1-5 5-6 8-5-1 5-3 9-7 8z" fill="#22a7ab" stroke="#0d6e78" strokeWidth=".7" />,
  drape: <path d="M-5 3c0-6 3-6 5-6s5 2 5 6l-3-1-2 1-3-1z" fill="#3fa0a8" />,
  normal: <path d="M-5 2l4-5 5 5-4 2z" fill="#b8743a" stroke="#6e4420" strokeWidth=".7" />,
  clean: <path d="M-3-4l3 1 1 3 3 2-3 2-4-4z" fill="#c2a820" stroke="#6b5c10" strokeWidth=".6" />,
};

function ports(n: number) {
  if (n === 1) return [0];
  if (n === 2) return [-7, 7];
  if (n === 3) return [-9, 0, 9];
  return [];
}

function NodeShape({ node }: { node: NetNode }) {
  const { x, y, kind = "box", icon, ins = 1, outs = 1, color = "#c6c6c6" } = node;
  const labelX = kind === "null" ? 15 : 21;
  const outY = kind === "merge" ? 10 : kind === "null" ? 12 : 8;
  return (
    <g transform={`translate(${x} ${y})`}>
      <g opacity={node.dim ? 0.6 : 1}>
        {kind !== "merge" && ports(ins).map((p) => <circle key={p} cx={p} cy={kind === "null" ? -11 : -8} r="2" fill={ins === 3 && p === 0 ? "#c774c9" : "#b5b5b5"} />)}
        {ports(outs).map((p) => <circle key={p} cx={p} cy={outY} r="2" fill={outs === 3 && p === 0 ? "#c774c9" : "#b5b5b5"} />)}
        {kind === "null" && <path d="M-9-5L9 5M9-5L-9 5" stroke="#93acc2" strokeWidth="8" strokeLinecap="round" />}
        {kind === "null" && <circle r="4.5" fill="#a9c0d2" stroke="#7d96ab" />}
        {kind === "merge" && <rect x="-14" y="-11" width="28" height="7" rx="3.5" fill="#a9a9a9" />}
        {kind === "object" && <path d="M-19-6h38l-4 12h-30z" fill="#c6c6c6" />}
        {kind === "box" && <rect x="-18" y="-6" width="36" height="12" rx="2" fill={color} />}
        {kind === "merge" && <rect x="-18" y="-6" width="36" height="13" rx="5" fill="#cdcdcd" />}
        {kind !== "null" && <path d="M-12-5l-1 10M-8-5l-1 10M9-5l-1 10M13-5l-1 10" stroke="#7a7a7a" />}
        {node.name === "vellumcloth_silk3" && <rect x="13" y="-5" width="4" height="10" fill="#2096dc" />}
        {kind !== "null" && nodeArt[icon ?? kind]}
      </g>
      <text x={labelX} y="2" fontSize="7" fill={node.dim ? "#909090" : "#c4c4c4"}>{node.name}</text>
      {node.sub && <text x="21" y={node.outs === 3 ? 19 : 15} fontSize="6" fill={node.dim ? "#6c7f98" : "#6b90c4"}>{node.sub}</text>}
      {node.flag && <rect x="23" y="6" width="4" height="4" fill="none" stroke="#6c756c" strokeWidth=".8" />}
      {node.warn && <><circle cx="25" cy="8" r="3.5" fill="#b5890f" /><path d="M25 6v2M25 9v1" stroke="#3d2f05" /></>}
    </g>
  );
}

function Network() {
  return (
    <svg viewBox="678 157 789 811" preserveAspectRatio="xMinYMin slice" className="size-full">
      <rect x="678" y="157" width="2000" height="1600" fill="#4f4f4f" />
      <text x="1008" y="191" fontSize="21" fill="#626262">Indie Edition</text>
      <text x="1328" y="198" fontSize="25" fontWeight="bold" fill="#757575">Geometry</text>
      <circle cx="1087" cy="641" r="28" fill="#62738c" />
      <circle cx="1087" cy="641" r="19" fill="#8c6f9c" />
      <g fill="none" stroke="#62779a" strokeWidth="1.2">
        <path d="M701 157L780 177Q786 179 787 185M854 157L802 177Q797 179 797 185M792 205L785 219M792 237Q793 243 798 249L1073 489Q1078 494 1078 499" />
        <path d="M1257 157v9M1257 183v18M1257 217q1 8 8 11L1420 297q6 3 7 9M1467 287L1444 298q-6 3-7 8M1433 326l3 14M1436 356q1 10 8 10h23" />
        <path d="M1151 321L1144 339M1151 356V374M1151 391L1144 409M1151 426L1144 443M1151 460V478" />
        <path d="M1133 487L1097 491Q1090 492 1089 499M1083 519L1084 557M870 558L1066 549Q1073 549 1074 557" />
        <path d="M1080 577L1079 590L1077 634M1080 577Q1080 585 1072 588L984 630Q976 634 975 640M1078 650L1074 675M1074 692V714M993 769V798M993 814V838M993 854L986 871M993 887V909M1124 769V798M1124 814V838M1124 854L1117 871M1124 887V909" />
        <path d="M1074 730Q1073 742 1060 742L995 742Q984 742 983 753M1074 730Q1077 742 1090 742H1103Q1114 742 1115 753" />
      </g>
      <path d="M678 567L870 558M1170 485L1467 456" stroke="#676b70" strokeWidth="1.2" />
      <circle cx="870" cy="559" r="2" fill="#6b6b6b" />
      <g fill="none" stroke="#a86db0" strokeWidth="1.2">
        <path d="M1087 650L1084 675M1083 692V714" />
        <path d="M1083 730Q1083 740 1070 742L1004 743Q994 743 993 753M1083 730Q1085 741 1098 742L1110 743Q1123 743 1124 753" />
      </g>
      <path
        d="M1151 498L1088 556M1067 575L998 632Q994 636 994 640M1151 498L1099 625L1096 634M1096 650L1092 675M1093 692V714M1093 730Q1094 741 1086 743L1010 743Q1003 744 1002 753M1093 730Q1096 741 1106 742L1128 743Q1133 745 1133 753"
        fill="none"
        stroke="#858c96"
        strokeDasharray="2 3"
      />
      {netNodes.map((n) => <NodeShape key={n.name} node={n} />)}
    </svg>
  );
}

/* ---------- parameter pane ---------- */

const FIELD = `min-w-0 border-2 border-[#242424] bg-[#040404] px-0.5 text-[15px] leading-none font-bold text-[#ededed] outline-none ${MONO}`;
const BUTTON = "border border-[#151515] bg-linear-to-b from-[#474747] to-[#333] text-[#b9b9b9] shadow-[1px_1px_0_#1a1a1a]";

function Tick({ id, checked }: { id: string; checked?: boolean }) {
  return (
    <span className="relative size-[15px] shrink-0">
      <input id={id} type="checkbox" defaultChecked={checked} className="peer block size-[15px] appearance-none border border-[#222] bg-[#060606]" />
      <Check className="pointer-events-none absolute inset-0.5 hidden size-3 text-[#e8e8e8] peer-checked:block" strokeWidth={5} />
    </span>
  );
}

function Ruler() {
  return (
    <svg className="pointer-events-none absolute inset-x-0 top-[15px] h-1 w-full">
      <defs>
        <pattern id="ruler" width="16" height="4" patternUnits="userSpaceOnUse"><path d="M.5 0v3" stroke="#8f8f8f" /></pattern>
      </defs>
      <rect width="100%" height="4" fill="url(#ruler)" />
    </svg>
  );
}

function SeamBlock({ index, group, target }: { index: number; group: string; target: string }) {
  const id = `seam${index}`;
  return (
    <div>
      <div className="flex h-[26px] items-center">
        <button className={`ml-2.5 flex h-[21px] w-5 items-center justify-center ${BUTTON}`} aria-label="Remove seam"><Svg className="size-2"><path d="M3 3l18 18M21 3L3 21" stroke="#dba3b0" strokeWidth="6" /></Svg></button>
        <button className={`flex h-[21px] w-[19px] items-center justify-center ${BUTTON}`} aria-label="Insert seam"><Svg className="size-3"><path d="M5 5q7-5 14 0" fill="none" stroke="#a4bd8d" strokeWidth="2" /><path d="M12 7v13M6 13h12" fill="none" stroke="#a4bd8d" strokeWidth="4" /></Svg></button>
        <span className="ml-[154px] flex items-center gap-1.5"><Tick id={`${id}-on`} checked /><label htmlFor={`${id}-on`}>Enable</label></span>
      </div>
      <div className="flex h-[27px] items-center">
        <label htmlFor={`${id}-group`} className="w-[193px] text-right">Group</label>
        <input id={`${id}-group`} defaultValue={group} className={`ml-2.5 h-[25px] flex-1 ${FIELD}`} />
      </div>
      <div className="flex h-7 items-center">
        <label htmlFor={`${id}-target`} className="w-[193px] text-right">Target Group</label>
        <input id={`${id}-target`} defaultValue={target} className={`ml-2.5 h-[25px] flex-1 ${FIELD}`} />
      </div>
      <div className="flex h-[25px] items-center">
        <label htmlFor={`${id}-cycle`} className="w-[193px] text-right">Cycle</label>
        <input id={`${id}-cycle`} defaultValue="0" className={`ml-2.5 h-[25px] w-[76px] border-2 border-[#242424] bg-[#040404] px-0.5 text-[15px] leading-none text-[#d5d5d5] outline-none ${MONO}`} />
        <span className="relative ml-0.5 h-[23px] flex-1">
          <Ruler />
          <input
            type="range"
            aria-label="Cycle"
            defaultValue={0}
            className="relative block h-[23px] w-full appearance-none bg-transparent [&::-webkit-slider-runnable-track]:h-1 [&::-webkit-slider-runnable-track]:bg-black [&::-webkit-slider-thumb]:-mt-2.5 [&::-webkit-slider-thumb]:h-[23px] [&::-webkit-slider-thumb]:w-1.5 [&::-webkit-slider-thumb]:appearance-none [&::-webkit-slider-thumb]:bg-[#8d8d8d]"
          />
        </span>
      </div>
    </div>
  );
}

function Tabs({ items, className }: { items: { label: string; w: string }[]; className: string }) {
  return (
    <div role="tablist" className={`flex h-6 ${className}`}>
      {items.map((t, i) => (
        <button
          key={t.label}
          role="tab"
          aria-selected={i === 0}
          className={`border border-l-0 border-black text-center first:border-l ${t.w} ${i === 0 ? "bg-[#3c3c3c] font-bold text-[#cfcfcf]" : "bg-linear-to-b from-[#414141] to-[#2f2f2f]"}`}
        >
          {t.label}
        </button>
      ))}
    </div>
  );
}

function Parameters() {
  return (
    <aside className="shrink-0 overflow-hidden border-b-2 border-l-2 border-[#262626] bg-[#2e2e2e] text-[12px] leading-5 whitespace-nowrap text-[#acacac]">
      <div className="flex h-7 items-center border-b border-black">
        <span className="relative ml-1 flex size-5 items-center"><Svg className="size-[18px]"><path d="M1 19C3 8 6 3 11 3s8 3 12 15l-5-1-2 3-4-3-3 3-4-3z" fill="#55a3a8" /><path d="M6 8c4-3 8-2 11 0" stroke="#9bd0d2" fill="none" strokeWidth="2" /></Svg><Tri /></span>
        <label htmlFor="node-name" className="ml-[3px] font-bold text-[#c6c6c6]">Vellum Drape</label>
        <input id="node-name" defaultValue="vellumdrape1" className={`ml-0.5 h-6 min-w-0 flex-1 bg-[#040404] px-1 text-[15px] leading-none text-[#c9c9c9] outline-none ${MONO}`} />
        <button className="relative mx-1 flex size-5 items-center" aria-label="Node options"><Settings className="size-4 text-[#d5d5d5]" strokeWidth={3} /><Tri /></button>
      </div>
      <div className="flex h-[30px] items-center"><button className={`ml-[149px] h-[23px] w-[127px] ${BUTTON}`}>Reset Simulation</button></div>
      <div className="flex h-7 items-center">
        <span className="ml-[3px] flex"><Tick id="freeze-on" checked /></span>
        <label htmlFor="freeze" className="w-[114px] text-right">Freeze at Frame</label>
        <input id="freeze" defaultValue="74" className={`ml-[17px] h-6 w-[90px] ${FIELD}`} />
        <span className="relative ml-1 h-[23px] flex-1">
          <Ruler />
          <input
            type="range"
            aria-label="Freeze at Frame"
            defaultValue={100}
            className="relative block h-[23px] w-full appearance-none bg-transparent [&::-webkit-slider-runnable-track]:h-1.5 [&::-webkit-slider-runnable-track]:border [&::-webkit-slider-runnable-track]:border-black [&::-webkit-slider-runnable-track]:bg-[#0b4aa0] [&::-webkit-slider-thumb]:h-1 [&::-webkit-slider-thumb]:w-1 [&::-webkit-slider-thumb]:appearance-none"
          />
        </span>
      </div>
      <p className="h-[26px] pl-[237px] leading-[26px]">Output Frozen</p>
      <fieldset className="rounded-l-md border border-r-0 border-[#161616] pb-2">
        <legend className="ml-1.5 px-0.5 leading-3">Disk Cache</legend>
        <div className="flex h-[31px] items-center gap-2 pl-[157px]"><Tick id="load" /><label htmlFor="load">Load from Disk</label></div>
        <div className="flex h-6 items-center">
          <label htmlFor="geo-file" className="w-[142px] text-right">Geometry File</label>
          <input id="geo-file" defaultValue="$HIP/drape/basketball_player.bgeo.sc" className={`ml-[15px] h-6 w-[192px] ${FIELD}`} />
          <button className={`ml-0.5 flex h-[22px] w-5 items-center justify-center text-[8px] ${BUTTON}`} aria-label="File history">▼</button>
          <button className="ml-2.5 flex w-5" aria-label="Choose file"><Svg className="size-5"><path d="M1 3h10l4 4v13H1z" fill="#909090" /><path d="M7 6l13 12h-6l-4 4z" fill="#111" stroke="#ddd" strokeWidth="1.5" /></Svg></button>
          <button className={`ml-2.5 h-[22px] w-24 shrink-0 pl-4 text-left ${BUTTON}`}>Reload</button>
        </div>
        <div className="flex h-7 items-center"><button className={`ml-[158px] h-[23px] w-[101px] ${BUTTON}`}>Save to Disk</button></div>
      </fieldset>
      <Tabs className="mt-[3px]" items={[{ label: "Draping", w: "w-[61px]" }, { label: "Solver", w: "w-[51px]" }, { label: "Forces", w: "w-[52px]" }, { label: "Simulation", w: "w-[76px]" }]} />
      <div className="mb-1 ml-px border-t border-b border-l border-t-[#484848] border-b-black border-l-[#111] pb-1">
        <div className="flex h-[23px] items-center gap-2 pl-[151px]"><Tick id="inflate" /><label htmlFor="inflate">Inflate Collisions</label></div>
        <div className="flex h-[23px] items-center gap-2 pl-[151px]"><Tick id="weld" checked /><label htmlFor="weld" className="font-bold text-[#c8c8c8]">Weld Additional Seams</label></div>
        <Tabs className="mt-px ml-[3px]" items={[{ label: "Weld Seams", w: "w-[83px]" }, { label: "Weld Properties", w: "w-[102px]" }]} />
        <div className="ml-[3px] border-t border-b border-l border-t-[#484848] border-b-black border-l-[#111] pb-1">
          <div className="flex h-[30px] items-start">
            <label htmlFor="seams" className="mt-1 w-[136px] text-right">Seams</label>
            <input id="seams" defaultValue="4" className={`mt-0.5 ml-4 h-6 w-[125px] ${FIELD}`} />
            <button className={`mt-0.5 h-[23px] w-[19px] ${BUTTON}`} aria-label="Add seam">+</button>
            <button className={`mt-0.5 h-[23px] w-[19px] ${BUTTON}`} aria-label="Drop seam">−</button>
            <button className={`mt-0.5 ml-0.5 h-[23px] w-16 ${BUTTON}`}>Clear</button>
          </div>
          <SeamBlock index={1} group="short_front_left_inside" target="short_front_left_inside1" />
          <SeamBlock index={2} group="short_front_left_outside" target="short_front_left_outside1" />
          <SeamBlock index={3} group="short_front_right_inside" target="short_front_right_inside1" />
          <SeamBlock index={4} group="short_front_right_outside" target="short_front_right_outside1" />
        </div>
      </div>
    </aside>
  );
}

function NetworkEditor() {
  return (
    <section className="flex min-w-0 flex-[1242_1_0%] flex-col">
      <div className="flex h-[21px] shrink-0 bg-[#1d1d1d] text-[11px] text-[#bdbdbd]">
        <PaneTab label="/obj/cloth_set_up_for_sim" w="w-[154px]" active text="text-[10px] italic" />
        <PaneTab label="/mat/cd_white" w="w-[106px]" text="font-bold text-[#d4d4d4]" />
        <button className="flex w-7 items-center justify-center" aria-label="New tab"><Plus className="size-3.5" strokeWidth={4} /></button>
      </div>
      <div className="flex h-9 shrink-0 items-center border-b border-black bg-[#3a3a3a] pl-1.5">
        <button className="relative h-5 w-[18px]" aria-label="Back"><Svg className="size-[18px]"><path d="M0 11l9-8v5h8v9H9v4z" fill="#bcbcbc" /></Svg><Tri dir="right" /></button>
        <button className="mx-2 h-5 w-[18px]" aria-label="Forward"><Svg className="size-[18px]"><path d="M20 11l-9-7v4H3v6h8v4z" fill="#5c5c5c" /></Svg></button>
        <PathBox />
      </div>
      <div className="flex h-7 shrink-0 items-center border-b border-black bg-linear-to-b from-[#313131] to-[#262626] text-[13px] text-[#c2c2c2]">
        <span className="flex h-full w-2.5 items-start justify-center border-r border-black text-[8px] text-black">▲</span>
        <nav className="flex gap-[15px] pl-2">
          {["Add", "Edit", "Go", "View", "Tools", "Layout", "Help"].map((m) => <button key={m}>{m}</button>)}
        </nav>
        <div className="-mr-1.5 ml-auto flex items-center gap-2 text-[#cfcfcf]">
          <button aria-label="Tools"><Wrench className="size-[18px]" strokeWidth={2.5} /></button>
          <button aria-label="Tree"><Svg className="size-[18px]"><path d="M5 1h3v21H5zM8 7h4M8 14h4M8 21h4" stroke="#aaa" strokeWidth="1.5" fill="#aaa" /><path d="M13 5h7v4h-7zM13 12h7v4h-7zM13 19h7v4h-7z" fill="#bbb" /></Svg></button>
          <button aria-label="List"><Svg className="size-[18px]"><path d="M3 1h18v22H3z" fill="#c9c9c9" /><path d="M3 6h18M3 11h18M3 16h18" stroke="#8d8d8d" /></Svg></button>
          <button className="ml-3.5 flex size-6 items-center justify-center border border-[#8a979c] bg-[#56636a]" aria-label="Color palette">
            <Svg className="size-[18px]">
              <path d="M1 1h22v22H1z" fill="#e9e9e9" />
              <path d="M4 4h4v4H4z" fill="#c22" /><path d="M10 4h4v4h-4z" fill="#d80" /><path d="M16 4h4v4h-4z" fill="#dc2" />
              <path d="M4 10h4v4H4z" fill="#24a" /><path d="M10 10h4v4h-4z" fill="#2a5" /><path d="M16 10h4v4h-4z" fill="#9c3" />
              <path d="M4 16h4v4H4z" fill="#111" /><path d="M10 16h4v4h-4z" fill="#777" /><path d="M16 16h4v4h-4z" fill="#bbb" />
            </Svg>
          </button>
          <button aria-label="Shape palette"><Svg className="size-[18px]"><path d="M2 2h20v20H2z" fill="none" stroke="#9a9a9a" strokeWidth="2" /><path d="M6 7h5M14 7h4M6 12h5M14 12h4M6 17h5M14 17h4" stroke="#aaa" strokeWidth="2.5" /></Svg></button>
          <button className="ml-[18px]" aria-label="Network box"><Svg className="size-[18px]"><path d="M2 2h20v20H2z" fill="#d5d5d5" /><path d="M4 6h16v14H4z" fill="#333" /><path d="M6 8h7v5H6zM12 14h7v4h-7z" fill="none" stroke="#ddd" strokeWidth="1.5" /></Svg></button>
          <button aria-label="Sticky note"><Svg className="size-[18px]"><path d="M1 2h22v14l-7 7H1z" fill="#d8c639" /><path d="M5 8h13M5 12h11M5 16h7" stroke="#6f6410" strokeWidth="1.5" /></Svg></button>
          <button aria-label="Background image"><ImageIcon className="size-5 text-[#a5c6dd]" fill="#3f78a0" /></button>
        </div>
      </div>
      <div className="flex min-h-0 flex-1 border-l border-[#3a3a3a] bg-[#4f4f4f]">
        <div className="min-w-0 flex-1 overflow-hidden"><Network /></div>
        <div className="flex w-[453px] shrink-0 flex-col">
          <Parameters />
          <div className="flex min-h-0 flex-1 justify-end">
            <div className="flex h-[21px] w-[60px] border-2 border-t-0 border-r-0 border-[#2a2a2a] bg-[#2a2a2a]">
              <span className="w-[25px] bg-black" /><span className="ml-0.5 w-[26px] bg-[#424242]" /><span className="ml-0.5 flex-1 bg-[#777]" />
            </div>
          </div>
        </div>
      </div>
      <div className="flex h-2.5 shrink-0 items-center justify-center gap-6 border-t border-[#555] bg-[#3a3a3a] pl-28 text-[6px] text-[#8a8a8a]"><span>▲</span><span className="text-[8px]">⠿⠿⠿</span><span>▲</span></div>
    </section>
  );
}

/* ---------- playbar ---------- */

const FRAME = 8.06;
const minorTicks = Array.from({ length: 192 }, (_, i) => `M${(i * FRAME + 0.5).toFixed(1)} 17v9`).join("");
const majorFrames = [24, 48, 72, 96, 120, 144, 168, 192];
const majorTicks = majorFrames.map((f) => `M${((f - 1) * FRAME + 0.5).toFixed(1)} 12v17`).join("");

function PlayButton({ label, w, on, children }: { label: string; w: string; on?: boolean; children: ReactNode }) {
  return (
    <button aria-label={label} className={`flex h-full items-center justify-center border border-black ${w} ${on ? "bg-linear-to-b from-[#55656d] to-[#7d8d94]" : "bg-linear-to-b from-[#454545] to-[#2e2e2e]"}`}>
      {children}
    </button>
  );
}

function Playbar() {
  const numField = "border border-[#1a1a1a] text-[13px] leading-none text-[#cdcdcd] outline-none";
  return (
    <section className="flex h-[75px] shrink-0 border-t border-[#4a4a4a] bg-[#232323] text-[#bdbdbd]">
      <div className="w-[211px] shrink-0 pl-0.5">
        <div className="mt-1.5 flex h-[30px]">
          <PlayButton label="Play backward" w="w-[30px]"><Svg className="size-4"><path d="M20 1v22L4 12z" fill="#dcdcdc" /></Svg></PlayButton>
          <PlayButton label="Stop" w="w-[29px]" on><span className="size-3.5 bg-[#dcdcdc]" /></PlayButton>
          <PlayButton label="Play" w="w-[29px]"><Svg className="size-4"><path d="M4 1v22l16-11z" fill="#dcdcdc" /></Svg></PlayButton>
          <PlayButton label="Last frame" w="w-[29px]"><Svg className="size-5"><path d="M1 5v14l9-7zM10 5v14l9-7zM20 5h3v14h-3z" fill="#dcdcdc" /></Svg></PlayButton>
          <input aria-label="Current frame" defaultValue="75" className={`ml-1 w-12 bg-[#050505] px-0.5 ${numField}`} />
          <span className="w-1" />
          <PlayButton label="Previous frame" w="w-[15px]"><Svg className="size-3"><path d="M13 2v20L2 12zM16 2h4v20h-4z" fill="#ccc" /></Svg></PlayButton>
          <PlayButton label="Next frame" w="w-[15px]"><Svg className="size-3"><path d="M11 2v20l11-10zM4 2h4v20H4z" fill="#ccc" /></Svg></PlayButton>
        </div>
        <div className="mt-2 flex h-[26px]">
          <PlayButton label="Audio" w="w-[30px]"><Svg><path d="M1 8h5l6-5v18l-6-5H1z" fill="#aaa" stroke="#222" /><ellipse cx="15" cy="12" rx="6" ry="10" fill="none" stroke="#ccc" strokeWidth="2" /><path d="M13 8v8" stroke="#ccc" strokeWidth="2" /></Svg></PlayButton>
          <PlayButton label="Loop" w="w-[29px]"><Svg><path d="M2 21h18v-3H8l4-4-7-3C7 6 16 5 18 12h3C19 1 4 0 2 10l-1 3 6-1z" fill="#ccc" /></Svg></PlayButton>
          <PlayButton label="Real time" w="w-[29px]" on><Svg><circle cx="12" cy="12" r="9.5" fill="none" stroke="#eee" strokeWidth="3" /><path d="M12 6v7h4" fill="none" stroke="#eee" strokeWidth="2.5" /></Svg></PlayButton>
          <span className="w-1" />
          <PlayButton label="Previous key" w="w-6"><Svg className="size-3.5"><path d="M4 2h3v20H4z" fill="#4d5a33" /><path d="M20 3v18L9 12z" fill="#4c4c4c" /></Svg></PlayButton>
          <PlayButton label="Next key" w="w-6"><Svg className="size-3.5"><path d="M17 2h3v20h-3z" fill="#4d5a33" /><path d="M4 3v18l11-9z" fill="#4c4c4c" /></Svg></PlayButton>
        </div>
      </div>
      <div className="min-w-0 flex-1">
        <svg viewBox="0 -3 1547 45" preserveAspectRatio="xMinYMin meet" className="block h-[45px] w-full">
          <rect x="0" y="11" width="621" height="11" fill="#0b5cbd" />
          <path d={minorTicks} stroke="#9a9a9a" strokeWidth="1" />
          <path d={majorTicks} stroke="#b5b5b5" strokeWidth="1" />
          <path d="M0 22h1547" stroke="#b9b9b9" strokeWidth="1.5" />
          <g fontSize="10" fill="#9b9b9b">
            <text x="3" y="6">1</text>
            {majorFrames.slice(0, 7).map((f) => <text key={f} x={(f - 1) * FRAME + 1} y="6">{f}</text>)}
            <text x="1541" y="6">1</text>
          </g>
          <path d="M584-1h26v20h-8l-6 5-6-5h-6z" fill="#040404" stroke="#d8d8d8" strokeWidth="1.5" />
          <text x="597" y="13" fontSize="12" fill="#f2f2f2" textAnchor="middle">75</text>
        </svg>
        <div className="flex h-6 items-center">
          <input aria-label="Range start" defaultValue="1" className={`h-6 w-[46px] bg-[#191919] px-1 ${numField}`} />
          <input aria-label="Playback start" defaultValue="1" className={`ml-1 h-6 w-[46px] bg-[#050505] px-0.5 ${numField}`} />
          <svg viewBox="0 0 8 14" className="h-3.5 w-2"><path d="M0 0l2 0 6 7-6 7H0z" fill="#9a9a9a" /></svg>
          <span className="h-1 flex-1 bg-[#707070]" />
          <svg viewBox="0 0 8 14" className="mr-0.5 h-3.5 w-2"><path d="M8 0v14L1 7z" fill="#9a9a9a" /></svg>
          <input aria-label="Playback end" defaultValue="192" className={`h-6 w-[46px] bg-[#050505] px-0.5 ${numField}`} />
          <input aria-label="Range end" defaultValue="192" className={`ml-0.5 h-6 w-[46px] bg-[#191919] px-1 ${numField}`} />
        </div>
      </div>
      <div className="flex w-[67px] shrink-0 pt-3.5">
        <button className="ml-1 flex size-[43px] items-center justify-center rounded-full border border-[#1a1a1a] bg-[#2b2b2b]" aria-label="Set key"><Key className="size-5 rotate-180 text-[#555]" strokeWidth={3} /></button>
        <button className="-ml-1 mt-[9px] flex h-6 w-[19px] items-center justify-center border border-[#1a1a1a] bg-[#2b2b2b]" aria-label="Key options"><ChevronDown className="size-3 fill-[#888] text-[#888]" /></button>
      </div>
      <div className="flex w-[95px] shrink-0 flex-col gap-1.5 overflow-hidden pt-[7px] pl-1 text-[11px] whitespace-nowrap">
        <div className="flex h-[26px] gap-1.5">
          <button className="relative flex w-[25px] shrink-0 items-center justify-center border border-black bg-[#4a4a4a]" aria-label="Scoped channels"><Svg className="size-[18px]"><path d="M2 2h18v20H2z" fill="#bdbdbd" /><path d="M2 5h5M2 12h5M2 19h5" stroke="#b04a3a" strokeWidth="3" /><path d="M8 9a6 6 0 0 1 11 0M20 14a6 6 0 0 1-11 0" fill="none" stroke="#222" strokeWidth="2.5" /></Svg><Tri dir="right" /></button>
          <button className={`w-32 shrink-0 pl-[18px] text-left ${BUTTON}`}>0 keys, 0/0 channels</button>
        </div>
        <div className="flex h-6 gap-1">
          <button className="flex w-[25px] shrink-0 items-center justify-center border border-black bg-[#4a4a4a]" aria-label="Channel editor"><Svg className="size-4"><path d="M0 0h24v24H0z" fill="#0b0b0b" /><path d="M1 14c5-12 7 8 12-4s6 2 10-1" fill="none" stroke="#6d9ad8" strokeWidth="1.5" /><path d="M1 10c6 12 8-6 12 5s6-4 10-5" fill="none" stroke="#d8a15a" strokeWidth="1.5" /><path d="M0 12h24" stroke="#ddd" /></Svg></button>
          <button className={`w-32 shrink-0 pl-3.5 text-left ${BUTTON}`}>Key All Channels</button>
        </div>
      </div>
    </section>
  );
}

function StatusBar() {
  return (
    <footer className="flex h-7 shrink-0 justify-end border-t border-black bg-[#0b0b0b] text-[12px] text-[#b5b5b5]">
      <button className="relative flex w-7 items-center justify-center bg-[#2b2b2b]" aria-label="Cook mode"><Svg className="size-[18px]"><path d="M2 13C2 6 8 3 13 3s9 4 9 9c0 4-3 4-4 5l-1 4-3-3H6c-3 0-4-2-4-5z" fill="#a5a5a5" /><path d="M6 9c3-2 4 2 7 0s4 1 6 0M6 14c3-1 6 1 9-1" fill="none" stroke="#777" /></Svg><Tri dir="right" /></button>
      <button className="flex w-[112px] items-center justify-center border-l border-[#4a4a4a] bg-linear-to-b from-[#454545] to-[#2e2e2e] pl-4">/obj/cloth_set_...</button>
      <span className="flex w-7 flex-col items-center justify-center text-[8px] leading-[9px] text-[#8d8d8d]"><span>▲</span><span>▼</span></span>
      <button className="flex w-[29px] items-center justify-center bg-[#242424]" aria-label="Refresh"><RefreshCw className="size-4 text-[#555]" strokeWidth={3} /></button>
      <span className="w-[17px] border-l border-[#444] bg-[#3a3a3a]" />
    </footer>
  );
}

function PaneDivider() {
  return (
    <div className="flex w-4 shrink-0 items-center border-x border-black bg-[#3a3a3a]">
      <div className="flex h-full flex-1 items-center justify-center border-r-2 border-black"><svg viewBox="0 0 4 72" className="h-[72px] w-1"><path d="M4 0v6L0 3zM4 66v6l-4-3z" fill="#8a8a8a" /><path d="M1 24v24M3 24v24" stroke="#8a8a8a" strokeDasharray="1 1" /></svg></div>
      <div className="flex flex-1 justify-center"><svg viewBox="0 0 4 72" className="h-[72px] w-1"><path d="M4 0v6L0 3zM0 66v6l4-3z" fill="#8a8a8a" /><path d="M1 24v24M3 24v24" stroke="#8a8a8a" strokeDasharray="1 1" /></svg></div>
    </div>
  );
}

export default function App() {
  return (
    <div className={`flex h-screen flex-col overflow-hidden bg-[#1d1d1d] leading-tight ${UI}`}>
      <svg className="absolute size-0"><defs><radialGradient id="ball" cx=".35" cy=".3"><stop offset="0" stopColor="#e6e8ea" /><stop offset="1" stopColor="#6f757b" /></radialGradient></defs></svg>
      <TopMenu />
      <Shelf />
      <main className="flex min-h-0 flex-1">
        <SceneView />
        <PaneDivider />
        <NetworkEditor />
      </main>
      <Playbar />
      <StatusBar />
    </div>
  );
}
